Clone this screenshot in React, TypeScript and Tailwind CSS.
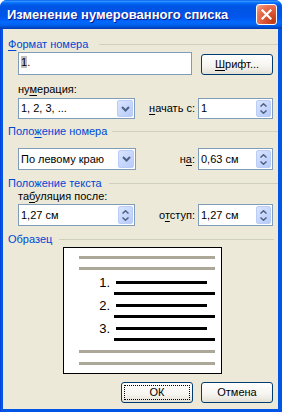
import React from "react";

function U({ c }: { c: string }) {
  return <span className="underline decoration-1 underline-offset-[2px]">{c}</span>;
}

function Header({ children, gap, right }: { children: React.ReactNode; gap: string; right: string }) {
  return (
    <div className={`flex items-center h-[13px] pl-[5px] ${right}`}>
      <span className="text-[#0046d5] whitespace-nowrap">{children}</span>
      <div className={`flex-1 h-px bg-[#d0d0bf] ${gap}`} />
    </div>
  );
}

function Chevron({ up }: { up?: boolean }) {
  return (
    <svg width="9" height="6" viewBox="0 0 9 6">
      <path
        d={up ? "M1 5 L4.5 1.5 L8 5" : "M1 1 L4.5 4.5 L8 1"}
        fill="none"
        stroke="#4d6185"
        strokeWidth="2"
      />
    </svg>
  );
}

function SmallChevron({ up }: { up?: boolean }) {
  return (
    <svg width="7" height="4" viewBox="0 0 7 4">
      <path d={up ? "M0.5 3.5 L3.5 0.8 L6.5 3.5" : "M0.5 0.5 L3.5 3.2 L6.5 0.5"} fill="none" stroke="#4d6185" strokeWidth="1.5" />
    </svg>
  );
}

function Combo({ value, w, h }: { value: string; w: string; h: string }) {
  return (
    <div className={`flex border border-[#7f9db9] bg-white ${w} ${h}`}>
      <span className="flex-1 flex items-center pl-[2px]">{value}</span>
      <div className="m-px w-[16px] rounded-[2px] border border-[#b9cdf8] bg-[linear-gradient(135deg,#d9e4fe,#b7cbfa)] flex items-center justify-center">
        <Chevron />
      </div>
    </div>
  );
}

function Spin({ value, w, h }: { value: string; w: string; h: string }) {
  return (
    <div className={`flex border border-[#7f9db9] bg-white ${w} ${h}`}>
      <span className="flex-1 flex items-center pl-[2px]">{value}</span>
      <div className="m-px w-[15px] rounded-[2px] border border-[#b9cdf8] bg-[linear-gradient(135deg,#d9e4fe,#b7cbfa)] flex flex-col items-center justify-center gap-[3px]">
        <SmallChevron up />
        <SmallChevron />
      </div>
    </div>
  );
}

function XpButton({ children, focus }: { children: React.ReactNode; focus?: boolean }) {
  return (
    <div className="w-[72px] h-[21px] rounded-[3px] border border-[#003c74] bg-[linear-gradient(180deg,#ffffff_0%,#f5f4ef_60%,#e3e0d4_100%)] p-[2px]">
      <div className={`h-full flex items-center justify-center ${focus ? "border border-dotted border-black" : ""}`}>
        {children}
      </div>
    </div>
  );
}

function Item({ n }: { n: string }) {
  return (
    <>
      <div className="flex items-center h-[13px]">
        <span className="w-[46px] text-right text-[13px] leading-[13px]">{n}</span>
        <div className="ml-[6px] w-[91px] h-[3px] bg-black" />
      </div>
      <div className="mt-[3px] ml-[50px] w-[101px] h-[3px] bg-black" />
    </>
  );
}

export default function App() {
  return (
    <div className="w-[282px] h-[412px] rounded-t-[7px] overflow-hidden bg-[linear-gradient(90deg,#0832c8_0px,#0058ee_1px,#0055e5_3px)] flex flex-col font-['Liberation_Sans',Arial,sans-serif] text-[11px] text-black">
      {/* Title bar */}
      <div className="h-[29px] shrink-0 flex items-center pl-[7px] pr-[5px] bg-[linear-gradient(180deg,#0058ee_0%,#3593ff_4%,#288eff_6%,#127dff_8%,#036ffc_10%,#0262ee_14%,#0057e5_20%,#0054e3_24%,#0055eb_56%,#005bf5_66%,#026afe_76%,#0062ef_86%,#0052d6_92%,#0046c8_96%,#0038b0_100%)]">
        <span className="flex-1 text-white font-bold text-[13px] whitespace-nowrap [text-shadow:1px_1px_0_#0a1883]">
          Изменение нумерованного списка
        </span>
        <div className="w-[21px] h-[21px] rounded-[3px] border border-white bg-[radial-gradient(circle_at_85%_85%,#c13a12_0%,#e0583a_45%,#ea7b5c_75%,#f7b49e_100%)] flex items-center justify-center">
          <svg width="11" height="11" viewBox="0 0 11 11">
            <path d="M1.5 1.5 L9.5 9.5 M9.5 1.5 L1.5 9.5" stroke="white" strokeWidth="2.2" strokeLinecap="square" />
          </svg>
        </div>
      </div>

      {/* Client area */}
      <div className="flex-1 ml-[3px] mr-[4px] mb-[3px] bg-[#ece9d8] flex flex-col">
        <div className="mt-[9px]">
          <Header gap="ml-[11px]" right="pr-0">
            <U c="Ф" />ормат номера
          </Header>
        </div>

        <div className="mt-px flex items-end pl-[15px] pr-[5px]">
          <div className="w-[174px] h-[23px] border border-[#7f9db9] bg-white pl-[2px] pt-px">
            <span className="bg-[#c0c0c0]">1</span>.
          </div>
          <div className="ml-auto">
            <XpButton>
              <span>
                <U c="Ш" />рифт...
              </span>
            </XpButton>
          </div>
        </div>

        <div className="mt-[8px] pl-[15px] h-[13px] leading-[13px]">
          ну<U c="м" />ерация:
        </div>

        <div className="mt-[2px] flex items-center pl-[15px] pr-[5px]">
          <Combo value="1, 2, 3, ..." w="w-[117px]" h="h-[21px]" />
          <span className="ml-auto">
            <U c="н" />ачать с:
          </span>
          <div className="ml-[3px]">
            <Spin value="1" w="w-[75px]" h="h-[21px]" />
          </div>
        </div>

        <div className="mt-[6px]">
          <Header gap="ml-[5px]" right="pr-0">
            Поло<U c="ж" />ение номера
          </Header>
        </div>

        <div className="mt-[10px] flex items-center pl-[15px] pr-[5px]">
          <Combo value="По левому краю" w="w-[118px]" h="h-[22px]" />
          <span className="ml-auto">
            н<U c="а" />:
          </span>
          <div className="ml-[3px]">
            <Spin value="0,63 см" w="w-[75px]" h="h-[22px]" />
          </div>
        </div>

        <div className="mt-[7px]">
          <Header gap="ml-[7px]" right="pr-0">
            Положение текста
          </Header>
        </div>

        <div className="pl-[15px] h-[13px] leading-[13px]">
          та<U c="б" />уляция после:
        </div>

        <div className="mt-px flex items-center pl-[15px] pr-[5px]">
          <Spin value="1,27 см" w="w-[117px]" h="h-[22px]" />
          <span className="ml-auto">
            о<U c="т" />ступ:
          </span>
          <div className="ml-[3px]">
            <Spin value="1,27 см" w="w-[75px]" h="h-[22px]" />
          </div>
        </div>

        <div className="mt-[7px]">
          <Header gap="ml-[7px]" right="pr-[4px]">
            Образец
          </Header>
        </div>

        <div className="mt-px ml-[60px] w-[159px] h-[127px] border border-black bg-white flex flex-col">
          <div className="mt-[8px] ml-[15px] w-[136px] h-[3px] bg-[#aca899]" />
          <div className="mt-[8px] ml-[15px] w-[136px] h-[3px] bg-[#aca899]" />
          <div className="mt-[6px]">
            <Item n="1." />
          </div>
          <div className="mt-[4px]">
            <Item n="2." />
          </div>
          <div className="mt-[4px]">
            <Item n="3." />
          </div>
          <div className="mt-[9px] ml-[15px] w-[136px] h-[3px] bg-[#aca899]" />
          <div className="mt-[9px] ml-[15px] w-[136px] h-[3px] bg-[#aca899]" />
        </div>

        <div className="mt-[8px] flex justify-end gap-[8px] pr-[5px]">
          <XpButton focus>ОК</XpButton>
          <XpButton>Отмена</XpButton>
        </div>
      </div>
    </div>
  );
}
